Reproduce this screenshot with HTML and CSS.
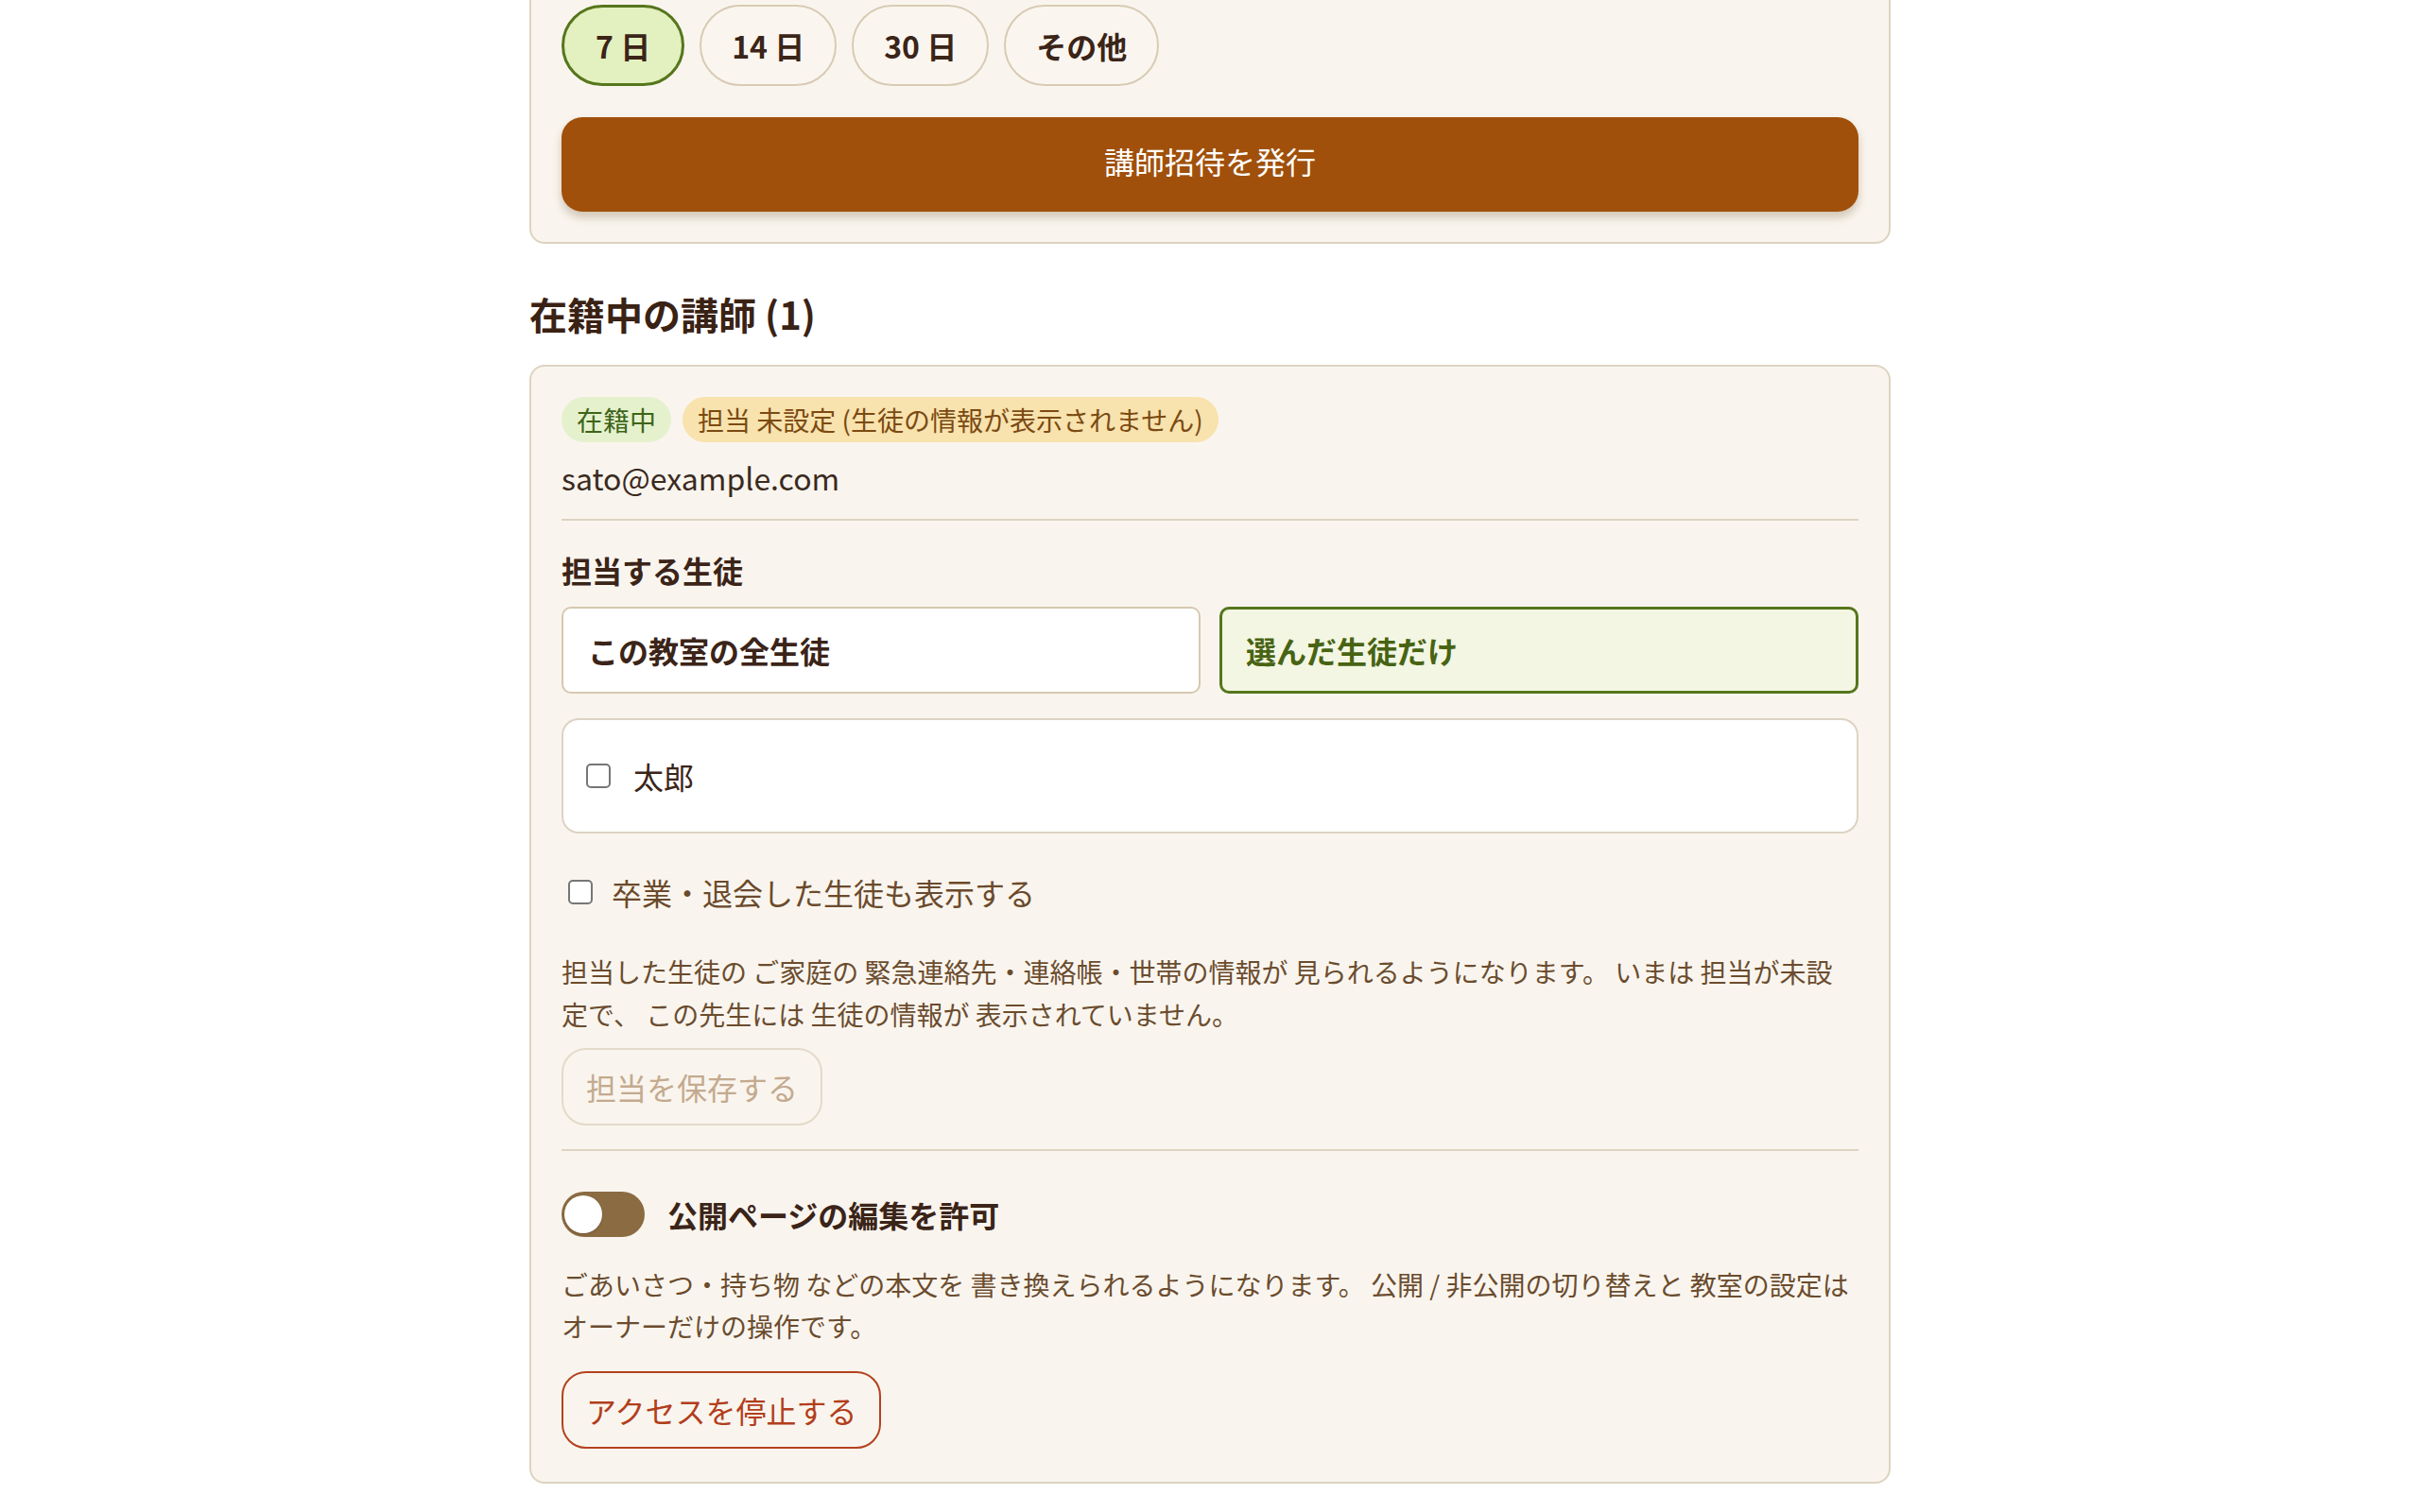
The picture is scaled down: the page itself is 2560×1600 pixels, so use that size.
FILE: index.html
```html
<!DOCTYPE html>
<html lang="ja">
<head>
    <meta charset="UTF-8">
    <meta name="viewport" content="width=device-width, initial-scale=1.0">
    <title>講師の管理</title>
    <link rel="stylesheet" href="styles.css">
</head>
<body>
    <div class="page">
        <section class="card invite-card">
            <div class="pills">
                <button class="pill is-active">7 日</button>
                <button class="pill">14 日</button>
                <button class="pill">30 日</button>
                <button class="pill">その他</button>
            </div>
            <button class="btn-primary">講師招待を発行</button>
        </section>

        <h2 class="section-title">在籍中の講師 (1)</h2>

        <section class="card teacher-card">
            <div class="badges">
                <span class="badge badge-active">在籍中</span>
                <span class="badge badge-warn">担当 未設定 (生徒の情報が表示されません)</span>
            </div>
            <div class="email">sato@example.com</div>

            <div class="field-label">担当する生徒</div>
            <div class="scope-choices">
                <button class="scope">この教室の全生徒</button>
                <button class="scope is-active">選んだ生徒だけ</button>
            </div>

            <div class="student-list">
                <label class="check-row"><input type="checkbox" class="check"> 太郎</label>
            </div>

            <label class="check-row show-retired"><input type="checkbox" class="check">卒業・退会した生徒も表示する</label>

            <p class="help help-students">担当した生徒の ご家庭の 緊急連絡先・連絡帳・世帯の情報が 見られるようになります。 いまは 担当が未設定で、 この先生には 生徒の情報が 表示されていません。</p>
            <button class="btn-outline btn-save" disabled>担当を保存する</button>

            <div class="divider"></div>

            <label class="switch-row">
                <span class="switch"><span class="knob"></span></span>
                公開ページの編集を許可
            </label>
            <p class="help help-public">ごあいさつ・持ち物 などの本文を 書き換えられるようになります。 公開 / 非公開の切り替えと 教室の設定は オーナーだけの操作です。</p>
            <button class="btn-outline btn-danger">アクセスを停止する</button>
        </section>
    </div>
</body>
</html>
```

FILE: styles.css
```css
body {
    margin: 0;
    background-color: #ffffff;
    font-family: "Noto Sans CJK JP", "Noto Sans", sans-serif;
    color: #3b2418;
}

* {
    box-sizing: border-box;
}

button {
    font-family: inherit;
}

/* the page is scrolled a little: the top of the invite card is above the fold */
.page {
    width: 1440px;
    margin: -29px auto 40px;
}

.card {
    background-color: #f9f5ee;
    border: 2px solid #ddd3c2;
    border-radius: 16px;
    padding: 32px;
}

.pills {
    display: flex;
    gap: 16px;
    margin-bottom: 33px;
}

.pill {
    height: 86px;
    padding: 0 32px;
    border: 2px solid #d8cbb4;
    border-radius: 43px;
    background-color: #faf6ef;
    color: #3b2418;
    font-size: 32px;
    font-weight: 700;
    cursor: pointer;
}

.pill.is-active {
    border: 3px solid #56761c;
    padding: 0 33px;
    background-color: #e3f0bf;
}

.btn-primary {
    display: block;
    width: 100%;
    height: 100px;
    padding: 0 0 8px;
    border: none;
    border-radius: 22px;
    background-color: #a0500a;
    color: #ffffff;
    font-size: 32px;
    box-shadow: 0 6px 10px rgba(90, 50, 10, 0.25);
    cursor: pointer;
}

.section-title {
    margin: 48px 0 28px;
    font-size: 40px;
    font-weight: 700;
    line-height: 52px;
    color: #3a2214;
}

.teacher-card {
    padding-bottom: 35px;
}

.badges {
    display: flex;
    gap: 12px;
    margin-bottom: 13px;
}

.badge {
    height: 48px;
    line-height: 48px;
    padding: 0 16px;
    border-radius: 24px;
    font-size: 28px;
}

.badge-active {
    background-color: #e5f1cd;
    color: #3e6419;
}

.badge-warn {
    background-color: #f8e2ad;
    color: #7b4a12;
}

.email {
    font-size: 32px;
    line-height: 48px;
    padding-bottom: 20px;
    border-bottom: 2px solid #ddd3c2;
    color: #3b2a1e;
}

.field-label {
    margin: 28px 0 15px;
    font-size: 32px;
    font-weight: 700;
    line-height: 48px;
}

.scope-choices {
    display: grid;
    grid-template-columns: 1fr 1fr;
    gap: 20px;
}

.scope {
    height: 92px;
    padding: 0 26px;
    border: 2px solid #d6c8b0;
    border-radius: 10px;
    background-color: #ffffff;
    color: #3b2418;
    font-size: 32px;
    font-weight: 700;
    text-align: left;
    cursor: pointer;
}

.scope.is-active {
    border: 3px solid #56761c;
    padding-left: 25px;
    background-color: #f3f6e2;
    color: #476313;
}

.student-list {
    display: flex;
    align-items: center;
    height: 122px;
    margin-top: 26px;
    padding: 0 24px;
    border: 2px solid #ddd3c3;
    border-radius: 18px;
    background-color: #ffffff;
}

.check-row {
    display: flex;
    align-items: center;
    gap: 20px;
    font-size: 32px;
    line-height: 48px;
    cursor: pointer;
}

.check {
    -webkit-appearance: none;
    appearance: none;
    width: 26px;
    height: 26px;
    margin: 0;
    border: 2.5px solid #767676;
    border-radius: 5px;
    background-color: #ffffff;
}

.student-list .check-row {
    gap: 24px;
    color: #3b2418;
}

.show-retired {
    margin-top: 38px;
    padding-left: 7px;
    color: #6b4a2c;
}

.help {
    margin: 0;
    font-size: 28px;
    line-height: 1.6;
    color: #6b4c2e;
}

.help-students {
    margin-top: 38px;
}

.help-public {
    margin-top: 28px;
}

.btn-outline {
    height: 82px;
    padding: 0 24px;
    border-radius: 26px;
    background-color: transparent;
    font-size: 32px;
    cursor: pointer;
}

.btn-save {
    margin-top: 13px;
    border: 2px solid #e3dac9;
    color: #c4aa8f;
    cursor: default;
}

.btn-danger {
    margin-top: 25px;
    border: 2px solid #b4421f;
    color: #b23e1c;
}

.divider {
    height: 2px;
    margin: 25px 0 43px;
    background-color: #ddd3c2;
}

.switch-row {
    display: flex;
    align-items: center;
    gap: 24px;
    height: 48px;
    font-size: 32px;
    font-weight: 700;
    cursor: pointer;
}

.switch {
    position: relative;
    width: 88px;
    height: 48px;
    border-radius: 24px;
    background-color: #8a6b42;
}

.switch .knob {
    position: absolute;
    left: 3px;
    top: 4px;
    width: 40px;
    height: 40px;
    border-radius: 50%;
    background-color: #ffffff;
    box-shadow: 0 1px 2px rgba(0, 0, 0, 0.2);
}
```
